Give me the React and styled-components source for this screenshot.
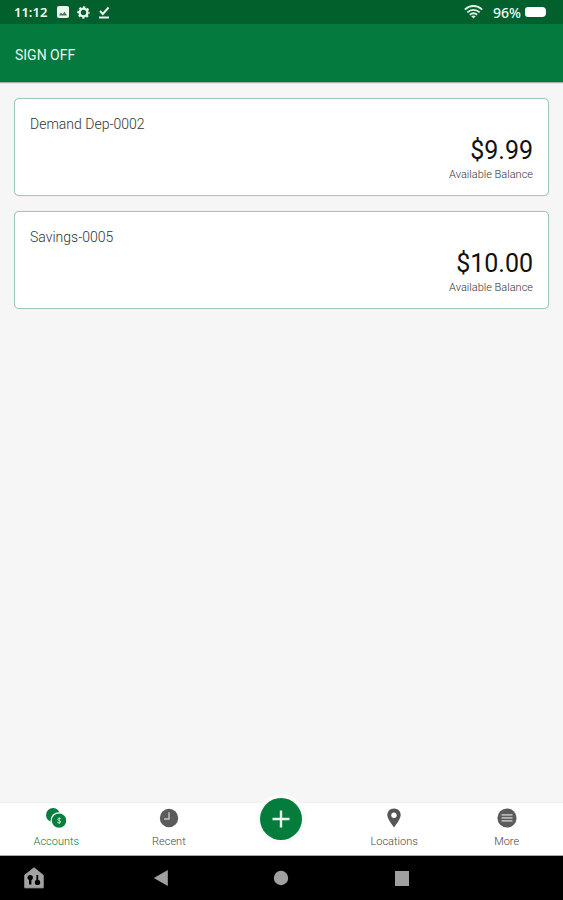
import React, { useState } from 'react';
import styled, { createGlobalStyle } from 'styled-components';

const GlobalStyle = createGlobalStyle`
  * {
    box-sizing: border-box;
  }
  body {
    margin: 0;
    background-color: #f6f6f6;
    font-family: Roboto, "Noto Sans", sans-serif;
  }
  button {
    margin: 0;
    padding: 0;
    border: none;
    background: none;
    font-family: inherit;
    cursor: pointer;
  }
`;

const Screen = styled.div`
  display: flex;
  flex-direction: column;
  min-height: 100vh;
`;

const StatusBar = styled.div`
  display: flex;
  align-items: center;
  justify-content: space-between;
  height: 24px;
  padding: 0 17px 0 14px;
  background-color: #02602d;
  color: #f4faf5;
  font-family: "Noto Sans", sans-serif;
`;

const StatusGroup = styled.div`
  display: flex;
  align-items: center;
  gap: ${(props) => props.$gap};

  svg {
    display: block;
  }
`;

const Clock = styled.span`
  margin-right: 2px;
  font-size: 13px;
  font-weight: 600;
`;

const BatteryLevel = styled.span`
  margin-left: 6px;
  font-size: 14px;
  font-weight: 500;
`;

const Battery = styled.span`
  width: 21px;
  height: 10px;
  border-radius: 3px 4px 4px 3px;
  background-color: #fff;
`;

const Header = styled.header`
  display: flex;
  align-items: center;
  height: 58px;
  padding: 4px 15px 0;
  background-color: #047a3e;
  box-shadow: 0 1px 1px rgba(0, 0, 0, 0.3);
`;

const SignOffButton = styled.button`
  color: #e9f5ee;
  font-size: 14px;
  font-weight: 400;
  line-height: 20px;
`;

const Main = styled.main`
  flex: 1;
  display: flex;
  flex-direction: column;
  gap: 15px;
  padding: 16px 14px;
`;

const Card = styled.section`
  display: flex;
  flex-direction: column;
  padding: 16px 15px 14px;
  border: 1px solid #9dcbb4;
  border-radius: 5px;
  background-color: #fff;
  box-shadow: 0 0 1px #b4d8c6;
`;

const AccountName = styled.h2`
  margin: 0;
  color: #333;
  font-size: 14px;
  font-weight: 300;
  line-height: 18px;
`;

const Amount = styled.div`
  color: #111;
  font-size: 25px;
  line-height: 36px;
  text-align: right;
`;

const AmountLabel = styled.div`
  color: #333;
  font-size: 11px;
  font-weight: 300;
  line-height: 12px;
  text-align: right;
`;

const TabBar = styled.nav`
  display: grid;
  grid-template-columns: repeat(5, 1fr);
  height: 53px;
  border-bottom: 1px solid #a8a8a8;
  background-color: #fff;
  box-shadow: 0 -1px 1px rgba(0, 0, 0, 0.03);
`;

const Tab = styled.button`
  display: flex;
  flex-direction: column;
  align-items: center;
  gap: 7px;
  padding-top: 5px;
  color: ${(props) => (props.$active ? '#0b7439' : '#444')};
  font-size: 11px;
  font-weight: 300;
  line-height: 14px;

  svg {
    display: block;
  }
`;

const AddButton = styled.button`
  display: flex;
  align-items: center;
  justify-content: center;
  justify-self: center;
  width: 42px;
  height: 42px;
  margin-top: -5px;
  border-radius: 50%;
  background-color: #047c3b;
  box-shadow: 0 0 0 4px #fbfbfb;
`;

const SystemBar = styled.div`
  display: grid;
  grid-template-columns: 18fr 64fr 18fr;
  align-items: center;
  height: 44px;
  background-color: #000;

  button {
    display: flex;
    justify-content: center;
  }
`;

const DeviceButton = styled.button`
  justify-self: start;
  margin-left: 24px;
`;

const SystemKeys = styled.div`
  display: grid;
  grid-template-columns: repeat(3, 1fr);
`;

const ImageIcon = () => (
  <svg width="12" height="12" viewBox="0 0 12 12" aria-hidden="true">
    <rect width="12" height="12" rx="2" fill="#eef6f0" />
    <path d="M2 9.5 4 6.5 5.5 8.2 7.6 5.8 10 9.5Z" fill="#3c7d56" />
  </svg>
);

const GearIcon = () => (
  <svg width="13" height="13" viewBox="0 0 13 13" aria-hidden="true">
    <circle cx="6.5" cy="6.5" r="3.9" fill="none" stroke="#eef6f0" strokeWidth="2.4" />
    <circle cx="6.5" cy="6.5" r="5.4" fill="none" stroke="#eef6f0" strokeWidth="1.6" strokeDasharray="2.2 2.04" strokeDashoffset="1.1" />
  </svg>
);

const DoneIcon = () => (
  <svg width="12" height="13" viewBox="0 0 12 13" aria-hidden="true">
    <path d="M2 5 4.8 8 10.6 1.5M1 11.5H11" fill="none" stroke="#eef6f0" strokeWidth="1.9" />
  </svg>
);

const WifiIcon = () => (
  <svg width="19" height="14" viewBox="0 0 19 14" aria-hidden="true">
    <g fill="none" stroke="#e6f3e9" strokeWidth="1.8">
      <path d="M.8 4.6C5.8-.2 13.2-.2 18.2 4.6" />
      <path d="M3.3 7.3C7 4 12 4 15.7 7.3" />
      <path d="M5.8 9.8C8 8 11 8 13.2 9.8" />
    </g>
    <path d="M7.3 11.3Q9.5 9.9 11.7 11.3L9.5 13.6Z" fill="#e6f3e9" />
  </svg>
);

const AccountsIcon = () => (
  <svg width="20" height="20" viewBox="0 0 20 20" aria-hidden="true">
    <circle cx="7" cy="7" r="7" fill="#077d3e" />
    <circle cx="12.8" cy="12.4" r="8.2" fill="#fff" />
    <circle cx="13" cy="12.6" r="7.2" fill="#077d3e" />
    <path d="M14.8 11C14.2 10.1 11.7 10.1 11.7 11.4S14.8 12.6 14.8 13.9 12 15.2 11.3 14.2M13.2 9.2V16" fill="none" stroke="#b9e0c6" strokeWidth="1" />
  </svg>
);

const RecentIcon = () => (
  <svg width="20" height="20" viewBox="0 0 20 20" aria-hidden="true">
    <circle cx="10" cy="10" r="9.2" fill="#5b5b5b" />
    <path d="M10 4.3V11H5" fill="none" stroke="#c4c4c4" strokeWidth="1.4" />
  </svg>
);

const PinIcon = () => (
  <svg width="20" height="20" viewBox="0 0 20 20" aria-hidden="true">
    <path d="M10 .6C6.2.6 3.3 3.4 3.3 7.1 3.3 11.5 10 19.4 10 19.4S16.7 11.5 16.7 7.1C16.7 3.4 13.8.6 10 .6Z" fill="#555" />
    <circle cx="10" cy="7.2" r="2.7" fill="#fff" />
  </svg>
);

const MoreIcon = () => (
  <svg width="20" height="20" viewBox="0 0 20 20" aria-hidden="true">
    <circle cx="10" cy="10" r="9.6" fill="#5b5b5b" />
    <path d="M4.5 6.8H15.5M4.5 9.8H15.5M4.5 12.8H15.5" stroke="#b5b5b5" strokeWidth="1.7" />
  </svg>
);

const PlusIcon = () => (
  <svg width="18" height="18" viewBox="0 0 18 18" aria-hidden="true">
    <path d="M9 .5V17.5M.5 9H17.5" stroke="#e9f7ec" strokeWidth="2.4" />
  </svg>
);

const HomeDeviceIcon = () => (
  <svg width="20" height="22" viewBox="0 0 20 22" aria-hidden="true">
    <path d="M10 .8 19.2 8.2V20.8H.8V8.2Z" fill="#a3a3a3" stroke="#a3a3a3" strokeLinejoin="round" />
    <circle cx="6.2" cy="10.6" r="2.7" fill="#000" />
    <path d="M5 12H7.4V17.5H5Z" fill="#000" />
    <path d="M12.4 8H14.2V14H12.4Z" fill="#000" />
    <circle cx="13.5" cy="15.4" r="2.7" fill="#000" />
  </svg>
);

const BackIcon = () => (
  <svg width="16" height="18" viewBox="0 0 16 18" aria-hidden="true">
    <path d="M.8 9 14.8 1V17Z" fill="#a0a0a0" />
  </svg>
);

const HomeIcon = () => (
  <svg width="16" height="18" viewBox="0 0 16 18" aria-hidden="true">
    <circle cx="8" cy="9" r="7.2" fill="#a0a0a0" />
  </svg>
);

const OverviewIcon = () => (
  <svg width="16" height="18" viewBox="0 0 16 18" aria-hidden="true">
    <rect x="1" y="2" width="14" height="15" fill="#a0a0a0" />
  </svg>
);

const accounts = [
  { name: 'Demand Dep-0002', balance: '$9.99' },
  { name: 'Savings-0005', balance: '$10.00' },
];

const App = () => {
  const [tab, setTab] = useState('Accounts');

  const renderTab = (name, icon) => (
    <Tab type="button" $active={tab === name} onClick={() => setTab(name)}>
      {icon}
      <span>{name}</span>
    </Tab>
  );

  return (
    <>
      <GlobalStyle />
      <Screen>
        <StatusBar>
          <StatusGroup $gap="8px">
            <Clock>11:12</Clock>
            <ImageIcon />
            <GearIcon />
            <DoneIcon />
          </StatusGroup>
          <StatusGroup $gap="4px">
            <WifiIcon />
            <BatteryLevel>96%</BatteryLevel>
            <Battery />
          </StatusGroup>
        </StatusBar>
        <Header>
          <SignOffButton type="button">SIGN OFF</SignOffButton>
        </Header>
        <Main>
          {accounts.map((account) => (
            <Card key={account.name}>
              <AccountName>{account.name}</AccountName>
              <Amount>{account.balance}</Amount>
              <AmountLabel>Available Balance</AmountLabel>
            </Card>
          ))}
        </Main>
        <TabBar>
          {renderTab('Accounts', <AccountsIcon />)}
          {renderTab('Recent', <RecentIcon />)}
          <AddButton type="button" aria-label="Add">
            <PlusIcon />
          </AddButton>
          {renderTab('Locations', <PinIcon />)}
          {renderTab('More', <MoreIcon />)}
        </TabBar>
        <SystemBar>
          <DeviceButton type="button" aria-label="Device dashboard">
            <HomeDeviceIcon />
          </DeviceButton>
          <SystemKeys>
            <button type="button" aria-label="Back"><BackIcon /></button>
            <button type="button" aria-label="Home"><HomeIcon /></button>
            <button type="button" aria-label="Overview"><OverviewIcon /></button>
          </SystemKeys>
        </SystemBar>
      </Screen>
    </>
  );
};

export default App;
